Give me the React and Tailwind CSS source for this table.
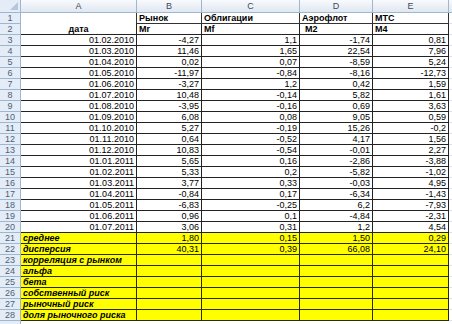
import React from "react";

const rows = [
  ["01.02.2010", "-4,27", "1,1", "-1,74", "0,81"],
  ["01.03.2010", "11,46", "1,65", "22,54", "7,96"],
  ["01.04.2010", "0,02", "0,07", "-8,59", "5,24"],
  ["01.05.2010", "-11,97", "-0,84", "-8,16", "-12,73"],
  ["01.06.2010", "-3,27", "1,2", "0,42", "1,59"],
  ["01.07.2010", "10,48", "-0,14", "5,82", "1,61"],
  ["01.08.2010", "-3,95", "-0,16", "0,69", "3,63"],
  ["01.09.2010", "6,08", "0,08", "9,05", "0,59"],
  ["01.10.2010", "5,27", "-0,19", "15,26", "-0,2"],
  ["01.11.2010", "0,64", "-0,52", "4,17", "1,56"],
  ["01.12.2010", "10,83", "-0,54", "-0,01", "2,27"],
  ["01.01.2011", "5,65", "0,16", "-2,86", "-3,88"],
  ["01.02.2011", "5,33", "0,2", "-5,82", "-1,02"],
  ["01.03.2011", "3,77", "0,33", "-0,03", "4,95"],
  ["01.04.2011", "-0,84", "0,17", "-6,34", "-1,43"],
  ["01.05.2011", "-6,83", "-0,25", "6,2", "-7,93"],
  ["01.06.2011", "0,96", "0,1", "-4,84", "-2,31"],
  ["01.07.2011", "3,06", "0,31", "1,2", "4,54"],
];

const yellowRows = [
  ["среднее", "1,80", "0,15", "1,50", "0,29"],
  ["дисперсия", "40,31", "0,39", "66,08", "24,10"],
  ["корреляция с рынком", "", "", "", ""],
  ["альфа", "", "", "", ""],
  ["бета", "", "", "", ""],
  ["собственный риск", "", "", "", ""],
  ["рыночный риск", "", "", "", ""],
  ["доля рыночного риска", "", "", "", ""],
];

const widths = ["w-[116px]", "w-[65px]", "w-[98px]", "w-[73px]", "w-[76px]"];

function RowHead({ n }) {
  return (
    <div className="w-[21px] shrink-0 h-[11px] bg-[#e4ecf7] border-r border-b border-[#9eb6ce] flex items-center justify-center text-[9px] leading-[10px] text-[#4f5f75]">
      {n}
    </div>
  );
}

function Filler() {
  return <div className="flex-1 h-full bg-white border-b border-[#dae2ed]" />;
}

export default function App() {
  return (
    <div
      className="w-[452px] h-[324px] overflow-hidden bg-white text-black"
      style={{ fontFamily: '"Liberation Sans", Arial, sans-serif' }}
    >
      {/* column header */}
      <div className="flex h-[13px]">
        <div className="w-[21px] shrink-0 h-[13px] bg-[#e4ecf7] border-r border-b border-[#9eb6ce] relative">
          <div className="absolute right-[2px] bottom-[2px] w-0 h-0 border-l-[8px] border-l-transparent border-b-[8px] border-b-[#b6c5d9]" />
        </div>
        {["A", "B", "C", "D", "E"].map((l, i) => (
          <div
            key={l}
            className={`${widths[i]} shrink-0 h-[13px] bg-gradient-to-b from-[#f8fafd] to-[#e0e7f1] border-r border-b border-[#9eb6ce] flex items-center justify-center text-[9px] leading-[10px] text-[#3e4a5a]`}
          >
            {l}
          </div>
        ))}
        <div className="flex-1 h-[13px] bg-gradient-to-b from-[#f8fafd] to-[#e0e7f1] border-b border-[#9eb6ce]" />
      </div>

      {/* row 1 */}
      <div className="flex h-[11px]">
        <RowHead n="1" />
        <div className="w-[116px] shrink-0 h-[11px] border-r border-[#333]" />
        {["Рынок", "Облигации", "Аэрофлот", "МТС"].map((t, i) => (
          <div
            key={t}
            className={`${widths[i + 1]} shrink-0 h-[11px] border-r border-b border-[#333] flex items-end pl-[2px] text-[9px] leading-[10px] font-bold`}
          >
            {t}
          </div>
        ))}
        <Filler />
      </div>

      {/* row 2 */}
      <div className="flex h-[11px]">
        <RowHead n="2" />
        <div className="w-[116px] shrink-0 h-[11px] border-r border-b border-[#222] flex items-end justify-center text-[9px] leading-[10px] font-bold">
          дата
        </div>
        {["Mr", "Mf", "M2", "M4"].map((t, i) => (
          <div
            key={t}
            className={`${widths[i + 1]} shrink-0 h-[11px] border-r border-b border-[#222] flex items-end ${i === 2 ? "pl-[5px]" : "pl-[2px]"} text-[9px] leading-[10px] font-bold`}
          >
            {t}
          </div>
        ))}
        <Filler />
      </div>

      {/* data rows */}
      {rows.map((r, ri) => (
        <div key={ri} className="flex h-[11px]">
          <RowHead n={ri + 3} />
          {r.map((v, ci) => (
            <div
              key={ci}
              className={`${widths[ci]} shrink-0 h-[11px] border-r border-b border-[#222] flex items-end justify-end pr-[2px] text-[9px] leading-[10px]`}
            >
              {v}
            </div>
          ))}
          <Filler />
        </div>
      ))}

      {/* yellow rows */}
      {yellowRows.map((r, ri) => (
        <div key={ri} className="flex h-[11px]">
          <RowHead n={ri + 21} />
          {r.map((v, ci) => (
            <div
              key={ci}
              className={`${widths[ci]} shrink-0 h-[11px] bg-[#ffff00] border-r border-b border-[#2b2b00] flex items-end ${ci === 0 ? "justify-start pl-[2px] font-bold italic" : "justify-end pr-[2px]"} text-[9px] leading-[10px] whitespace-nowrap`}
            >
              {v}
            </div>
          ))}
          <Filler />
        </div>
      ))}

      {/* partial next row */}
      <div className="flex h-[3px]">
        <div className="w-[21px] shrink-0 h-full bg-[#e4ecf7] border-r border-[#9eb6ce]" />
        <div className="flex-1 h-full bg-white" />
      </div>
    </div>
  );
}
